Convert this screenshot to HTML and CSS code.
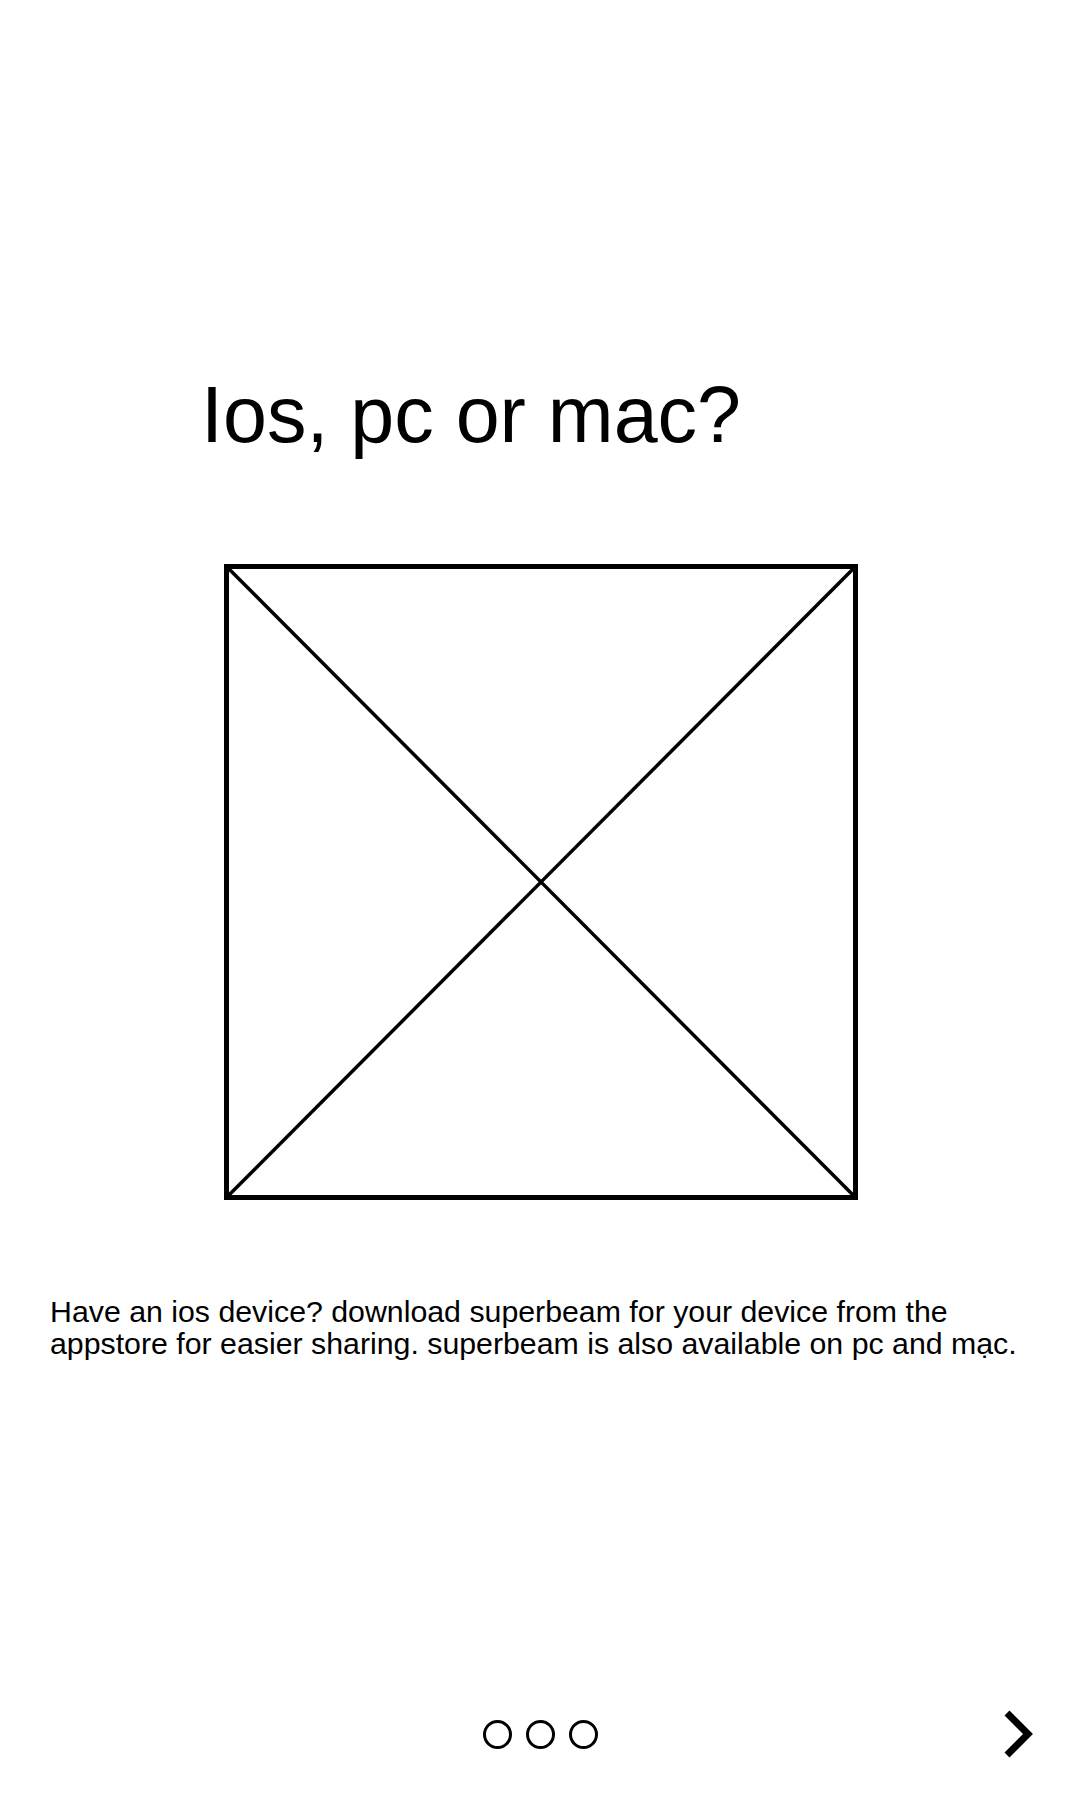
FILE: index.html
```html
<!DOCTYPE html>
<html lang="en">
<head>
    <meta charset="UTF-8">
    <meta name="viewport" content="width=device-width, initial-scale=1.0">
    <link rel="stylesheet" href="styles.css">
</head>
<body>

<div class="screen">
    <h1 class="title">Ios, pc or mac?</h1>

    <!-- image placeholder -->
    <div class="picture">
        <svg width="634" height="636" viewBox="0 0 634 636">
            <line x1="3" y1="3" x2="631" y2="633" stroke="#000" stroke-width="3.5"/>
            <line x1="631" y1="3" x2="3" y2="633" stroke="#000" stroke-width="3.5"/>
            <rect x="2.5" y="2.5" width="629" height="631" fill="none" stroke="#000" stroke-width="5"/>
        </svg>
    </div>

    <p class="desc">Have an ios device? download superbeam for your device from the appstore for easier sharing. superbeam is also available on pc and mạc.</p>

    <div class="footer">
        <div></div>
        <div class="dots">
            <span class="dot"></span>
            <span class="dot"></span>
            <span class="dot"></span>
        </div>
        <div class="next">
            <svg width="40" height="52" viewBox="0 0 40 52">
                <polyline points="7,5 28,26 7,47" fill="none" stroke="#000" stroke-width="7"/>
            </svg>
        </div>
    </div>
</div>

</body>
</html>
```

FILE: styles.css
```css
body {
    margin: 0;
    padding: 0;
    font-family: "Liberation Sans", Arial, sans-serif;
    background-color: #fff;
    color: #000;
}

.screen {
    width: 1080px;
    height: 1800px;
    display: flex;
    flex-direction: column;
    box-sizing: border-box;
}

.title {
    margin: 375px 0 0 201px;
    font-size: 79px;
    line-height: 80px;
    font-weight: 400;
}

.picture {
    display: flex;
    margin: 109px 0 0 224px;
}

.picture svg {
    display: block;
}

.desc {
    margin: 96px 30px 0 50px;
    font-size: 30.3px;
    line-height: 32px;
}

.footer {
    margin-top: auto;
    display: grid;
    grid-template-columns: 1fr auto 1fr;
    align-items: center;
    padding: 0 40px 40px 40px;
}

.dots {
    display: flex;
    gap: 14px;
}

.dot {
    width: 23px;
    height: 23px;
    border: 3px solid #000;
    border-radius: 50%;
}

.next {
    justify-self: end;
}

.next svg {
    display: block;
}
```
